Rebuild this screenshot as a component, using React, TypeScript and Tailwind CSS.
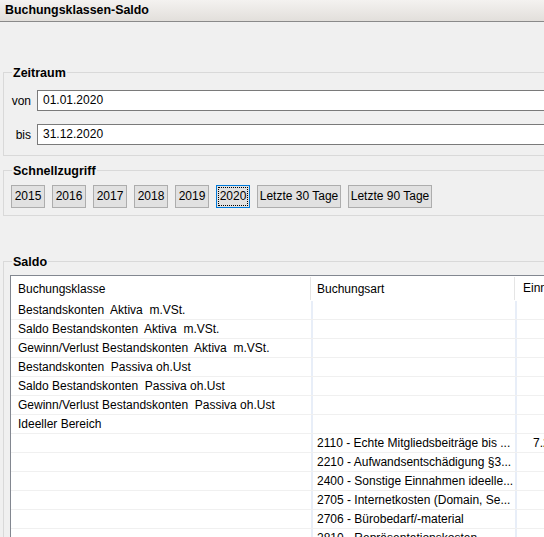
import React from 'react';

const font = { fontFamily: '"Segoe UI", "Liberation Sans", Arial, sans-serif' };

const years = ['2015', '2016', '2017', '2018', '2019', '2020'];

const klassen = [
  'Bestandskonten  Aktiva  m.VSt.',
  'Saldo Bestandskonten  Aktiva  m.VSt.',
  'Gewinn/Verlust Bestandskonten  Aktiva  m.VSt.',
  'Bestandskonten  Passiva oh.Ust',
  'Saldo Bestandskonten  Passiva oh.Ust',
  'Gewinn/Verlust Bestandskonten  Passiva oh.Ust',
  'Ideeller Bereich',
];

const arten: { art: string; ein: string }[] = [
  { art: '2110 - Echte Mitgliedsbeiträge bis ...', ein: '7.260,00' },
  { art: '2210 - Aufwandsentschädigung §3...', ein: '' },
  { art: '2400 - Sonstige Einnahmen ideelle...', ein: '' },
  { art: '2705 - Internetkosten (Domain, Se...', ein: '' },
  { art: '2706 - Bürobedarf/-material', ein: '' },
  { art: '2810 - Repräsentationskosten', ein: '' },
];

function Row({ a, b, c }: { a: string; b: string; c: string }) {
  return (
    <div className="flex h-[19px] border-b border-[#f0f0f0] leading-[18px]">
      <div className="w-[302px] shrink-0 pl-[7px] whitespace-pre border-r-2 border-[#e8eef8]">{a}</div>
      <div className="w-[204px] shrink-0 pl-[4px] whitespace-pre border-r-2 border-[#e8eef8]">{b}</div>
      <div className="flex-1 pl-[16px] whitespace-pre">{c}</div>
    </div>
  );
}

export default function App() {
  return (
    <div className="w-[544px] h-[537px] overflow-hidden bg-[#f0f0f0] text-[12px] text-black" style={font}>
      <div className="h-[22px] border-b border-[#8a8a8a] bg-gradient-to-b from-[#f4f2f0] to-[#e2dfdb] pl-[5px] text-[12.4px] font-bold leading-[21px]">
        Buchungsklassen-Saldo
      </div>

      <fieldset className="mt-[41px] ml-[3px] w-[600px] border border-[#d9d9d9] pt-[9px] pb-[10px]">
        <legend className="ml-[8px] px-[1px] pt-[2px] text-[12.5px] font-bold leading-[16px]">Zeitraum</legend>
        <div className="flex items-center gap-[6px]">
          <span className="w-[27px] text-right">von</span>
          <div className="h-[21px] flex-1 border border-[#7a7a7a] bg-white pl-[5px] leading-[19px]">01.01.2020</div>
        </div>
        <div className="mt-[13px] flex items-center gap-[6px]">
          <span className="w-[27px] text-right">bis</span>
          <div className="h-[21px] flex-1 border border-[#7a7a7a] bg-white pl-[5px] leading-[19px]">31.12.2020</div>
        </div>
      </fieldset>

      <fieldset className="mt-[5px] ml-[3px] w-[600px] border border-[#d9d9d9] pt-[6px] pb-[7px] pl-[7px]">
        <legend className="ml-[1px] px-[1px] pt-[2px] text-[12.5px] font-bold leading-[16px]">Schnellzugriff</legend>
        <div className="flex gap-[7px]">
          {years.map(y =>
            y === '2020' ? (
              <div key={y} className="h-[23px] w-[34px] border border-[#0078d7] bg-[#e1e1e1] p-[1px]">
                <div className="h-full w-full border border-dotted border-black text-center leading-[17px]">{y}</div>
              </div>
            ) : (
              <div key={y} className="h-[23px] w-[34px] border border-[#adadad] bg-[#e1e1e1] text-center leading-[21px]">{y}</div>
            )
          )}
          <div className="h-[23px] w-[84px] border border-[#adadad] bg-[#e1e1e1] text-center leading-[21px]">Letzte 30 Tage</div>
          <div className="h-[23px] w-[84px] border border-[#adadad] bg-[#e1e1e1] text-center leading-[21px]">Letzte 90 Tage</div>
        </div>
      </fieldset>

      <fieldset className="mt-[36px] ml-[3px] w-[600px] border border-[#d9d9d9] pt-[5px] pl-[6px]">
        <legend className="ml-[2px] px-[1px] pt-[2px] text-[12.5px] font-bold leading-[16px]">Saldo</legend>
        <div className="border-t border-l border-[#828790] bg-white">
          <div className="flex h-[25px] leading-[24px]">
            <div className="w-[300px] shrink-0 pl-[7px] my-[1px] border-r border-[#e5e5e5]">Buchungsklasse</div>
            <div className="w-[204px] shrink-0 pl-[6px] my-[1px] border-r border-[#e5e5e5]">Buchungsart</div>
            <div className="flex-1 pl-[8px]">Einnahmen</div>
          </div>
          {klassen.map(k => (
            <Row key={k} a={k} b="" c="" />
          ))}
          {arten.map(r => (
            <Row key={r.art} a="" b={r.art} c={r.ein} />
          ))}
        </div>
      </fieldset>
    </div>
  );
}
